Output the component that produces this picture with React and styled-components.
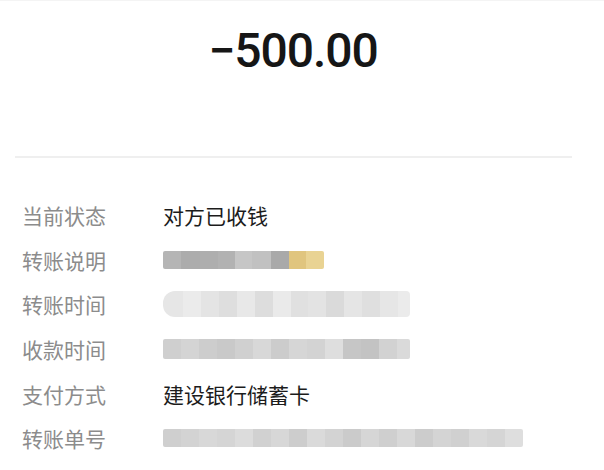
import styled, { createGlobalStyle } from 'styled-components';

const GlobalStyle = createGlobalStyle`
  html, body {
    margin: 0;
    padding: 0;
    background: #fff;
  }
  body {
    font-family: 'Noto Sans CJK SC', 'Noto Sans', sans-serif;
    -webkit-font-smoothing: antialiased;
  }
`;

const rows = [
  { label: '当前状态', value: '对方已收钱' },
  {
    label: '转账说明',
    mosaic: {
      height: 18,
      cells: [
        ['#b5b5b5', 18],
        ['#acacac', 19],
        ['#aeaeae', 18],
        ['#b2b2b2', 17],
        ['#c6c6c6', 17],
        ['#c1c1c1', 19],
        ['#a9a9a9', 18],
        ['#e0c57e', 17],
        ['#e9d393', 18],
      ],
    },
  },
  {
    label: '转账时间',
    mosaic: {
      height: 26,
      pill: true,
      cells: [
        ['#e6e6e6', 20],
        ['#ebebeb', 18],
        ['#e4e4e4', 18],
        ['#dedede', 18],
        ['#e8e8e8', 18],
        ['#dddddd', 18],
        ['#eaeaea', 18],
        ['#e0e0e0', 17],
        ['#e3e3e3', 18],
        ['#dadada', 18],
        ['#e5e5e5', 18],
        ['#dfdfdf', 18],
        ['#e6e6e6', 18],
        ['#ebebeb', 12],
      ],
    },
  },
  {
    label: '收款时间',
    mosaic: {
      height: 20,
      cells: [
        ['#cfcfcf', 18],
        ['#d4d4d4', 18],
        ['#cdcdcd', 18],
        ['#c9c9c9', 18],
        ['#d0d0d0', 18],
        ['#d8d8d8', 18],
        ['#cccccc', 18],
        ['#d6d6d6', 18],
        ['#d3d3d3', 18],
        ['#dedede', 18],
        ['#c6c6c6', 18],
        ['#c3c3c3', 18],
        ['#d2d2d2', 18],
        ['#dadada', 13],
      ],
    },
  },
  { label: '支付方式', value: '建设银行储蓄卡' },
  {
    label: '转账单号',
    mosaic: {
      height: 18,
      cells: [
        ['#cfcfcf', 18],
        ['#d3d3d3', 18],
        ['#d8d8d8', 18],
        ['#d5d5d5', 18],
        ['#dcdcdc', 18],
        ['#d1d1d1', 18],
        ['#d7d7d7', 18],
        ['#cdcdcd', 18],
        ['#dadada', 18],
        ['#d3d3d3', 18],
        ['#cbcbcb', 18],
        ['#d6d6d6', 18],
        ['#cfcfcf', 18],
        ['#d8d8d8', 18],
        ['#cccccc', 18],
        ['#d4d4d4', 18],
        ['#d0d0d0', 18],
        ['#d9d9d9', 18],
        ['#d5d5d5', 18],
        ['#dedede', 18],
      ],
    },
  },
];

const Mosaic = ({ height, cells, pill }) => (
  <MosaicStrip $h={height} $pill={pill}>
    {cells.map(([bg, w], i) => (
      <Cell key={i} $bg={bg} $w={w} />
    ))}
  </MosaicStrip>
);

export default function App() {
  return (
    <Page>
      <GlobalStyle />
      <Header>
        <Amount>−500.00</Amount>
      </Header>
      <Divider />
      <DetailList>
        {rows.map((row) => (
          <Row key={row.label}>
            <Label>{row.label}</Label>
            {row.mosaic ? (
              <Mosaic {...row.mosaic} />
            ) : (
              <Value>{row.value}</Value>
            )}
          </Row>
        ))}
      </DetailList>
    </Page>
  );
}

const Page = styled.div`
  width: 604px;
  height: 470px;
  overflow: hidden;
  background: #fff;
  border-top: 1px solid #f4f4f4;
  box-sizing: border-box;
`;

const Header = styled.div`
  display: flex;
  justify-content: center;
  padding: 26px 18px 0 0;
  height: 129px;
`;

const Amount = styled.div`
  font-family: Roboto, 'Liberation Sans', sans-serif;
  font-size: 48px;
  line-height: 48px;
  font-weight: 500;
  color: #161616;
  letter-spacing: -1px;
`;

const Divider = styled.div`
  height: 2px;
  margin: 0 32px 0 15px;
  background: #efefef;
`;

const DetailList = styled.div`
  display: flex;
  flex-direction: column;
  padding: 35px 0 0 22px;
`;

const Row = styled.div`
  display: flex;
  align-items: center;
  height: 44.6px;
`;

const Label = styled.div`
  width: 141px;
  flex-shrink: 0;
  font-size: 21px;
  color: #8c8c8c;
`;

const Value = styled.div`
  font-size: 21px;
  color: #1c1c1c;
`;

const MosaicStrip = styled.div`
  display: flex;
  height: ${(p) => p.$h}px;
  border-radius: ${(p) => (p.$pill ? '12px 4px 4px 12px' : '2px')};
  overflow: hidden;
  filter: blur(0.7px);
`;

const Cell = styled.div`
  width: ${(p) => p.$w}px;
  height: 100%;
  background: ${(p) => p.$bg};
`;
